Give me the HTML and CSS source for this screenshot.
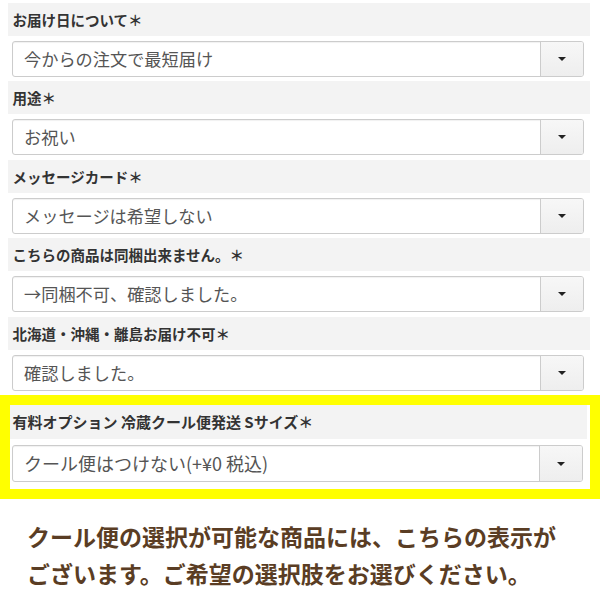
FILE: index.html
```html
<!DOCTYPE html>
<html lang="ja">
<head>
<meta charset="utf-8">
<title>オプション選択</title>
<link rel="stylesheet" href="styles.css">
</head>
<body>
<div class="form">
  <div class="field">
    <div class="label">お届け日について＊</div>
    <div class="select"><span class="value">今からの注文で最短届け</span><span class="btn"><i class="caret"></i></span></div>
  </div>
  <div class="field">
    <div class="label">用途＊</div>
    <div class="select"><span class="value">お祝い</span><span class="btn"><i class="caret"></i></span></div>
  </div>
  <div class="field">
    <div class="label">メッセージカード＊</div>
    <div class="select"><span class="value">メッセージは希望しない</span><span class="btn"><i class="caret"></i></span></div>
  </div>
  <div class="field">
    <div class="label">こちらの商品は同梱出来ません。＊</div>
    <div class="select"><span class="value">→同梱不可、確認しました。</span><span class="btn"><i class="caret"></i></span></div>
  </div>
  <div class="field">
    <div class="label">北海道・沖縄・離島お届け不可＊</div>
    <div class="select"><span class="value">確認しました。</span><span class="btn"><i class="caret"></i></span></div>
  </div>
  <div class="highlight">
    <div class="field field-hl">
      <div class="label">有料オプション 冷蔵クール便発送 Sサイズ＊</div>
      <div class="select"><span class="value">クール便はつけない(+¥0 税込)</span><span class="btn"><i class="caret"></i></span></div>
    </div>
  </div>
  <p class="note">クール便の選択が可能な商品には、こちらの表示が<br>ございます。ご希望の選択肢をお選びください。</p>
</div>
</body>
</html>
```
FILE: styles.css
```css
html, body {
  margin: 0;
  padding: 0;
  background: #ffffff;
}
body {
  width: 600px;
  height: 612px;
  overflow: hidden;
  font-family: "Noto Sans CJK JP", "Noto Sans", sans-serif;
}
.form {
  padding-top: 2.5px;
}
.field {
  margin: 0 10px 4.5px 8px;
}
.label {
  height: 33px;
  background: #f3f3f3;
  padding-left: 4.5px;
  font-size: 14.5px;
  font-weight: 700;
  color: #333333;
  line-height: 33px;
  white-space: nowrap;
}
.select {
  margin: 5px 6px 0 4px;
  height: 36px;
  box-sizing: border-box;
  border: 1px solid #cccccc;
  border-radius: 3px;
  background: #ffffff;
  display: flex;
  box-shadow: inset 0 1px 1px rgba(0,0,0,0.06);
}
.value {
  flex: 1;
  padding-left: 11px;
  font-size: 17.2px;
  line-height: 33px;
  color: #555555;
  white-space: nowrap;
}
.btn {
  width: 42px;
  border-left: 1px solid #cccccc;
  background: linear-gradient(#f7f7f7, #eeeeee);
  border-radius: 0 2px 2px 0;
  display: flex;
  align-items: center;
  justify-content: center;
}
.caret {
  display: block;
  width: 0;
  height: 0;
  border-left: 4px solid transparent;
  border-right: 4px solid transparent;
  border-top: 4px solid #222222;
}
.highlight {
  margin-top: 4px;
  border: 10px solid #ffff00;
  background: #ffffff;
  height: 84px;
}
.field-hl {
  margin: 0 3px 0 0;
}
.field-hl .label {
  height: 34px;
  line-height: 34px;
  padding-left: 2.5px;
  font-size: 15px;
}
.field-hl .select {
  margin: 6px 4px 0 2px;
  height: 37px;
}
.field-hl .value {
  font-size: 18px;
  line-height: 34px;
}
.note {
  margin: 18.5px 0 0 27px;
  font-size: 23px;
  font-weight: 700;
  line-height: 37px;
  color: #5a3d24;
  white-space: nowrap;
}
```
